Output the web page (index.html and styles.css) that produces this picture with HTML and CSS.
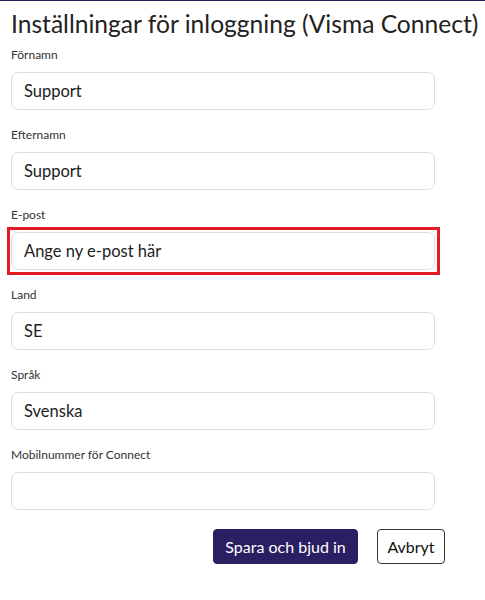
FILE: index.html
```html
<!DOCTYPE html>
<html lang="sv">
<head>
<meta charset="utf-8">
<link rel="stylesheet" href="styles.css">
</head>
<body>
<div class="page">
  <h1 class="title">Inställningar för inloggning (Visma Connect)</h1>
  <form class="form">
    <div class="field">
      <label class="label">Förnamn</label>
      <div class="input">Support</div>
    </div>
    <div class="field">
      <label class="label">Efternamn</label>
      <div class="input">Support</div>
    </div>
    <div class="field">
      <label class="label">E-post</label>
      <div class="highlight">
        <div class="input">Ange ny e-post här</div>
      </div>
    </div>
    <div class="field">
      <label class="label">Land</label>
      <div class="input">SE</div>
    </div>
    <div class="field">
      <label class="label">Språk</label>
      <div class="input">Svenska</div>
    </div>
    <div class="field">
      <label class="label">Mobilnummer för Connect</label>
      <div class="input"></div>
    </div>
    <div class="actions">
      <button type="button" class="btn btn-primary">Spara och bjud in</button>
      <button type="button" class="btn btn-secondary">Avbryt</button>
    </div>
  </form>
</div>
</body>
</html>
```
FILE: styles.css
```css
html, body {
  margin: 0;
  padding: 0;
  background: #ffffff;
}
body {
  font-family: Lato, "Open Sans", sans-serif;
  color: #212529;
  border-top: 1px solid #2a1f5e;
}
.page {
  padding: 0 0 0 11px;
}
.title {
  margin: 0;
  font-size: 24.6px;
  font-weight: 400;
  line-height: 45px;
  color: #222;
  white-space: nowrap;
}
.form {
  margin: 1px 0 0 0;
}
.field {
  margin-bottom: 17px;
}
.label {
  display: block;
  font-size: 12px;
  line-height: 16px;
  color: #333;
  margin-bottom: 9px;
}
.input {
  box-sizing: border-box;
  width: 424px;
  height: 38px;
  border: 1px solid #dcdde3;
  border-radius: 7px;
  padding: 0 12px;
  font-size: 16.5px;
  line-height: 36px;
  color: #222;
}
.highlight {
  width: max-content;
  margin: -5px 0 -5px -4px;
  padding: 2px 2px 2px 1px;
  border: 3px solid #e31d23;
}
.actions {
  width: 434px;
  display: flex;
  justify-content: flex-end;
  gap: 19px;
  margin-top: 19px;
}
.btn {
  box-sizing: border-box;
  height: 35px;
  font-family: Lato, "Open Sans", sans-serif;
  font-size: 16px;
  border-radius: 4px;
  padding: 0;
  white-space: nowrap;
  cursor: pointer;
}
.btn-primary {
  width: 145px;
  background: #2b1e63;
  color: #ffffff;
  border: 1px solid #2b1e63;
}
.btn-secondary {
  width: 68px;
  background: #ffffff;
  color: #111;
  border: 1px solid #333;
}
```
